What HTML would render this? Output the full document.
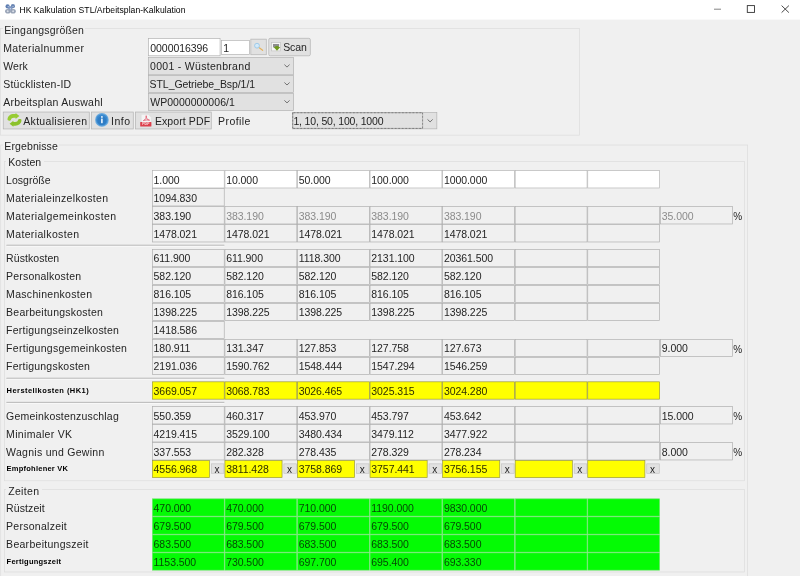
<!DOCTYPE html><html lang="de"><head><meta charset="utf-8"><title>HK Kalkulation STL/Arbeitsplan-Kalkulation</title>
<style>
html,body{margin:0;padding:0}
body{width:800px;height:576px;overflow:hidden;background:#f0f0f0;position:relative;
 font-family:"Liberation Sans",sans-serif;font-size:10.5px;color:#242424}
div,span{position:absolute;box-sizing:border-box}
#w{left:0;top:0;width:800px;height:576px;will-change:transform;filter:blur(0.35px)}
.t{white-space:nowrap;line-height:14px;height:14px;letter-spacing:0.26px}
.n{letter-spacing:-0.06px}
.g{color:#8b8b8b}
.ty{color:#2e2e00}
.tg{color:#064806}
.b{font-weight:bold;font-size:7.5px;color:#000;letter-spacing:0.1px}
.tt{font-size:8.6px;color:#000}
.gl{background:#f0f0f0}
svg{position:absolute;overflow:visible}
</style></head><body><div id="w">
<svg style="left:0;top:0" width="800" height="576" viewBox="0 0 800 576">
<rect x="0" y="0" width="800" height="19.6" fill="#fff"/>
<path d="M714 9.2H721" stroke="#777" stroke-width="0.9" fill="none"/>
<rect x="747.3" y="5.6" width="7.2" height="6.8" stroke="#333" stroke-width="0.9" fill="none"/>
<path d="M781.6 5.6L788.9 12.6M788.9 5.6L781.6 12.6" stroke="#333" stroke-width="0.9" fill="none"/>
<rect x="0.54" y="28.44" width="578.83" height="106.73" fill="none" stroke="#dcdcdc" stroke-width="0.67"/>
<rect x="148.64" y="38.54" width="71.43" height="17.23" fill="#fff" stroke="#b0b0b0" stroke-width="0.67"/>
<rect x="221.53" y="40.34" width="27.93" height="14.13" fill="#fff" stroke="#b0b0b0" stroke-width="0.67"/>
<rect x="250.84" y="39.13" width="15.43" height="15.63" fill="#e1e1e1" stroke="#b0b0b0" stroke-width="0.67"/>
<rect x="268.73" y="38.34" width="41.63" height="17.43" fill="#e1e1e1" stroke="#b0b0b0" stroke-width="0.67" rx="1.5"/>
<rect x="148.44" y="57.54" width="145.03" height="17.23" fill="#e1e1e1" stroke="#b0b0b0" stroke-width="0.67"/>
<path d="M284.4 64.60l2.6 2.5l2.6 -2.5" stroke="#555" stroke-width="0.8" fill="none"/>
<rect x="148.44" y="75.43" width="145.03" height="17.23" fill="#e1e1e1" stroke="#b0b0b0" stroke-width="0.67"/>
<path d="M284.4 82.50l2.6 2.5l2.6 -2.5" stroke="#555" stroke-width="0.8" fill="none"/>
<rect x="148.44" y="93.33" width="145.03" height="17.23" fill="#e1e1e1" stroke="#b0b0b0" stroke-width="0.67"/>
<path d="M284.4 100.40l2.6 2.5l2.6 -2.5" stroke="#555" stroke-width="0.8" fill="none"/>
<rect x="3.23" y="112.03" width="86.03" height="16.93" fill="#e1e1e1" stroke="#b0b0b0" stroke-width="0.67"/>
<rect x="91.53" y="112.03" width="41.73" height="16.93" fill="#e1e1e1" stroke="#b0b0b0" stroke-width="0.67"/>
<rect x="135.53" y="112.03" width="75.73" height="16.93" fill="#e1e1e1" stroke="#b0b0b0" stroke-width="0.67"/>
<rect x="292.33" y="112.33" width="144.53" height="16.53" fill="#e1e1e1" stroke="#b0b0b0" stroke-width="0.67"/>
<rect x="292.8" y="112.8" width="129.8" height="15.6" fill="none" stroke="#222" stroke-width="0.7" stroke-dasharray="0.7 0.7"/>
<path d="M427.5 119.4l2.6 2.5l2.6 -2.5" stroke="#555" stroke-width="0.8" fill="none"/>
<rect x="0.74" y="145.03" width="746.93" height="444.63" fill="none" stroke="#dcdcdc" stroke-width="0.67"/>
<rect x="4.63" y="161.44" width="739.93" height="319.33" fill="none" stroke="#dcdcdc" stroke-width="0.67"/>
<rect x="152.34" y="170.64" width="71.90" height="17.33" fill="#fff" stroke="#b4b4b4" stroke-width="0.67"/>
<rect x="224.91" y="170.64" width="71.90" height="17.33" fill="#fff" stroke="#b4b4b4" stroke-width="0.67"/>
<rect x="297.47" y="170.64" width="71.90" height="17.33" fill="#fff" stroke="#b4b4b4" stroke-width="0.67"/>
<rect x="370.04" y="170.64" width="71.90" height="17.33" fill="#fff" stroke="#b4b4b4" stroke-width="0.67"/>
<rect x="442.61" y="170.64" width="71.90" height="17.33" fill="#fff" stroke="#b4b4b4" stroke-width="0.67"/>
<rect x="515.18" y="170.64" width="71.90" height="17.33" fill="#fff" stroke="#b4b4b4" stroke-width="0.67"/>
<rect x="587.75" y="170.64" width="71.90" height="17.33" fill="#fff" stroke="#b4b4b4" stroke-width="0.67"/>
<rect x="152.34" y="188.64" width="71.90" height="17.33" fill="#f0f0f0" stroke="#adadad" stroke-width="0.67"/>
<rect x="152.34" y="206.64" width="71.90" height="17.33" fill="#f0f0f0" stroke="#adadad" stroke-width="0.67"/>
<rect x="224.91" y="206.64" width="71.90" height="17.33" fill="#f0f0f0" stroke="#adadad" stroke-width="0.67"/>
<rect x="297.47" y="206.64" width="71.90" height="17.33" fill="#f0f0f0" stroke="#adadad" stroke-width="0.67"/>
<rect x="370.04" y="206.64" width="71.90" height="17.33" fill="#f0f0f0" stroke="#adadad" stroke-width="0.67"/>
<rect x="442.61" y="206.64" width="71.90" height="17.33" fill="#f0f0f0" stroke="#adadad" stroke-width="0.67"/>
<rect x="515.18" y="206.64" width="71.90" height="17.33" fill="#f0f0f0" stroke="#adadad" stroke-width="0.67"/>
<rect x="587.75" y="206.64" width="71.90" height="17.33" fill="#f0f0f0" stroke="#adadad" stroke-width="0.67"/>
<rect x="660.34" y="206.64" width="72.13" height="17.33" fill="#f0f0f0" stroke="#adadad" stroke-width="0.67"/>
<rect x="152.34" y="224.64" width="71.90" height="17.33" fill="#f0f0f0" stroke="#adadad" stroke-width="0.67"/>
<rect x="224.91" y="224.64" width="71.90" height="17.33" fill="#f0f0f0" stroke="#adadad" stroke-width="0.67"/>
<rect x="297.47" y="224.64" width="71.90" height="17.33" fill="#f0f0f0" stroke="#adadad" stroke-width="0.67"/>
<rect x="370.04" y="224.64" width="71.90" height="17.33" fill="#f0f0f0" stroke="#adadad" stroke-width="0.67"/>
<rect x="442.61" y="224.64" width="71.90" height="17.33" fill="#f0f0f0" stroke="#adadad" stroke-width="0.67"/>
<rect x="515.18" y="224.64" width="71.90" height="17.33" fill="#f0f0f0" stroke="#adadad" stroke-width="0.67"/>
<rect x="587.75" y="224.64" width="71.90" height="17.33" fill="#f0f0f0" stroke="#adadad" stroke-width="0.67"/>
<rect x="152.34" y="249.34" width="71.90" height="17.33" fill="#f0f0f0" stroke="#adadad" stroke-width="0.67"/>
<rect x="224.91" y="249.34" width="71.90" height="17.33" fill="#f0f0f0" stroke="#adadad" stroke-width="0.67"/>
<rect x="297.47" y="249.34" width="71.90" height="17.33" fill="#f0f0f0" stroke="#adadad" stroke-width="0.67"/>
<rect x="370.04" y="249.34" width="71.90" height="17.33" fill="#f0f0f0" stroke="#adadad" stroke-width="0.67"/>
<rect x="442.61" y="249.34" width="71.90" height="17.33" fill="#f0f0f0" stroke="#adadad" stroke-width="0.67"/>
<rect x="515.18" y="249.34" width="71.90" height="17.33" fill="#f0f0f0" stroke="#adadad" stroke-width="0.67"/>
<rect x="587.75" y="249.34" width="71.90" height="17.33" fill="#f0f0f0" stroke="#adadad" stroke-width="0.67"/>
<rect x="152.34" y="267.33" width="71.90" height="17.33" fill="#f0f0f0" stroke="#adadad" stroke-width="0.67"/>
<rect x="224.91" y="267.33" width="71.90" height="17.33" fill="#f0f0f0" stroke="#adadad" stroke-width="0.67"/>
<rect x="297.47" y="267.33" width="71.90" height="17.33" fill="#f0f0f0" stroke="#adadad" stroke-width="0.67"/>
<rect x="370.04" y="267.33" width="71.90" height="17.33" fill="#f0f0f0" stroke="#adadad" stroke-width="0.67"/>
<rect x="442.61" y="267.33" width="71.90" height="17.33" fill="#f0f0f0" stroke="#adadad" stroke-width="0.67"/>
<rect x="515.18" y="267.33" width="71.90" height="17.33" fill="#f0f0f0" stroke="#adadad" stroke-width="0.67"/>
<rect x="587.75" y="267.33" width="71.90" height="17.33" fill="#f0f0f0" stroke="#adadad" stroke-width="0.67"/>
<rect x="152.34" y="285.33" width="71.90" height="17.33" fill="#f0f0f0" stroke="#adadad" stroke-width="0.67"/>
<rect x="224.91" y="285.33" width="71.90" height="17.33" fill="#f0f0f0" stroke="#adadad" stroke-width="0.67"/>
<rect x="297.47" y="285.33" width="71.90" height="17.33" fill="#f0f0f0" stroke="#adadad" stroke-width="0.67"/>
<rect x="370.04" y="285.33" width="71.90" height="17.33" fill="#f0f0f0" stroke="#adadad" stroke-width="0.67"/>
<rect x="442.61" y="285.33" width="71.90" height="17.33" fill="#f0f0f0" stroke="#adadad" stroke-width="0.67"/>
<rect x="515.18" y="285.33" width="71.90" height="17.33" fill="#f0f0f0" stroke="#adadad" stroke-width="0.67"/>
<rect x="587.75" y="285.33" width="71.90" height="17.33" fill="#f0f0f0" stroke="#adadad" stroke-width="0.67"/>
<rect x="152.34" y="303.33" width="71.90" height="17.33" fill="#f0f0f0" stroke="#adadad" stroke-width="0.67"/>
<rect x="224.91" y="303.33" width="71.90" height="17.33" fill="#f0f0f0" stroke="#adadad" stroke-width="0.67"/>
<rect x="297.47" y="303.33" width="71.90" height="17.33" fill="#f0f0f0" stroke="#adadad" stroke-width="0.67"/>
<rect x="370.04" y="303.33" width="71.90" height="17.33" fill="#f0f0f0" stroke="#adadad" stroke-width="0.67"/>
<rect x="442.61" y="303.33" width="71.90" height="17.33" fill="#f0f0f0" stroke="#adadad" stroke-width="0.67"/>
<rect x="515.18" y="303.33" width="71.90" height="17.33" fill="#f0f0f0" stroke="#adadad" stroke-width="0.67"/>
<rect x="587.75" y="303.33" width="71.90" height="17.33" fill="#f0f0f0" stroke="#adadad" stroke-width="0.67"/>
<rect x="152.34" y="321.33" width="71.90" height="17.33" fill="#f0f0f0" stroke="#adadad" stroke-width="0.67"/>
<rect x="152.34" y="339.33" width="71.90" height="17.33" fill="#f0f0f0" stroke="#adadad" stroke-width="0.67"/>
<rect x="224.91" y="339.33" width="71.90" height="17.33" fill="#f0f0f0" stroke="#adadad" stroke-width="0.67"/>
<rect x="297.47" y="339.33" width="71.90" height="17.33" fill="#f0f0f0" stroke="#adadad" stroke-width="0.67"/>
<rect x="370.04" y="339.33" width="71.90" height="17.33" fill="#f0f0f0" stroke="#adadad" stroke-width="0.67"/>
<rect x="442.61" y="339.33" width="71.90" height="17.33" fill="#f0f0f0" stroke="#adadad" stroke-width="0.67"/>
<rect x="515.18" y="339.33" width="71.90" height="17.33" fill="#f0f0f0" stroke="#adadad" stroke-width="0.67"/>
<rect x="587.75" y="339.33" width="71.90" height="17.33" fill="#f0f0f0" stroke="#adadad" stroke-width="0.67"/>
<rect x="660.34" y="339.33" width="72.13" height="17.33" fill="#f0f0f0" stroke="#adadad" stroke-width="0.67"/>
<rect x="152.34" y="357.33" width="71.90" height="17.33" fill="#f0f0f0" stroke="#adadad" stroke-width="0.67"/>
<rect x="224.91" y="357.33" width="71.90" height="17.33" fill="#f0f0f0" stroke="#adadad" stroke-width="0.67"/>
<rect x="297.47" y="357.33" width="71.90" height="17.33" fill="#f0f0f0" stroke="#adadad" stroke-width="0.67"/>
<rect x="370.04" y="357.33" width="71.90" height="17.33" fill="#f0f0f0" stroke="#adadad" stroke-width="0.67"/>
<rect x="442.61" y="357.33" width="71.90" height="17.33" fill="#f0f0f0" stroke="#adadad" stroke-width="0.67"/>
<rect x="515.18" y="357.33" width="71.90" height="17.33" fill="#f0f0f0" stroke="#adadad" stroke-width="0.67"/>
<rect x="587.75" y="357.33" width="71.90" height="17.33" fill="#f0f0f0" stroke="#adadad" stroke-width="0.67"/>
<rect x="152.34" y="406.63" width="71.90" height="17.33" fill="#f0f0f0" stroke="#adadad" stroke-width="0.67"/>
<rect x="224.91" y="406.63" width="71.90" height="17.33" fill="#f0f0f0" stroke="#adadad" stroke-width="0.67"/>
<rect x="297.47" y="406.63" width="71.90" height="17.33" fill="#f0f0f0" stroke="#adadad" stroke-width="0.67"/>
<rect x="370.04" y="406.63" width="71.90" height="17.33" fill="#f0f0f0" stroke="#adadad" stroke-width="0.67"/>
<rect x="442.61" y="406.63" width="71.90" height="17.33" fill="#f0f0f0" stroke="#adadad" stroke-width="0.67"/>
<rect x="515.18" y="406.63" width="71.90" height="17.33" fill="#f0f0f0" stroke="#adadad" stroke-width="0.67"/>
<rect x="587.75" y="406.63" width="71.90" height="17.33" fill="#f0f0f0" stroke="#adadad" stroke-width="0.67"/>
<rect x="660.34" y="406.63" width="72.13" height="17.33" fill="#f0f0f0" stroke="#adadad" stroke-width="0.67"/>
<rect x="152.34" y="424.63" width="71.90" height="17.33" fill="#f0f0f0" stroke="#adadad" stroke-width="0.67"/>
<rect x="224.91" y="424.63" width="71.90" height="17.33" fill="#f0f0f0" stroke="#adadad" stroke-width="0.67"/>
<rect x="297.47" y="424.63" width="71.90" height="17.33" fill="#f0f0f0" stroke="#adadad" stroke-width="0.67"/>
<rect x="370.04" y="424.63" width="71.90" height="17.33" fill="#f0f0f0" stroke="#adadad" stroke-width="0.67"/>
<rect x="442.61" y="424.63" width="71.90" height="17.33" fill="#f0f0f0" stroke="#adadad" stroke-width="0.67"/>
<rect x="515.18" y="424.63" width="71.90" height="17.33" fill="#f0f0f0" stroke="#adadad" stroke-width="0.67"/>
<rect x="587.75" y="424.63" width="71.90" height="17.33" fill="#f0f0f0" stroke="#adadad" stroke-width="0.67"/>
<rect x="152.34" y="442.63" width="71.90" height="17.33" fill="#f0f0f0" stroke="#adadad" stroke-width="0.67"/>
<rect x="224.91" y="442.63" width="71.90" height="17.33" fill="#f0f0f0" stroke="#adadad" stroke-width="0.67"/>
<rect x="297.47" y="442.63" width="71.90" height="17.33" fill="#f0f0f0" stroke="#adadad" stroke-width="0.67"/>
<rect x="370.04" y="442.63" width="71.90" height="17.33" fill="#f0f0f0" stroke="#adadad" stroke-width="0.67"/>
<rect x="442.61" y="442.63" width="71.90" height="17.33" fill="#f0f0f0" stroke="#adadad" stroke-width="0.67"/>
<rect x="515.18" y="442.63" width="71.90" height="17.33" fill="#f0f0f0" stroke="#adadad" stroke-width="0.67"/>
<rect x="587.75" y="442.63" width="71.90" height="17.33" fill="#f0f0f0" stroke="#adadad" stroke-width="0.67"/>
<rect x="660.34" y="442.63" width="72.13" height="17.33" fill="#f0f0f0" stroke="#adadad" stroke-width="0.67"/>
<path d="M6.50 245.30L224.30 245.30" stroke="#8e8e8e" stroke-width="0.8" fill="none"/>
<path d="M6.50 246.10L224.30 246.10" stroke="#ffffff" stroke-width="0.8" fill="none"/>
<path d="M6.50 378.30L224.30 378.30" stroke="#8e8e8e" stroke-width="0.8" fill="none"/>
<path d="M6.50 379.10L224.30 379.10" stroke="#ffffff" stroke-width="0.8" fill="none"/>
<path d="M6.50 402.40L224.30 402.40" stroke="#8e8e8e" stroke-width="0.8" fill="none"/>
<path d="M6.50 403.20L224.30 403.20" stroke="#ffffff" stroke-width="0.8" fill="none"/>
<rect x="152.34" y="381.83" width="71.90" height="17.33" fill="#ffff00" stroke="#96963c" stroke-width="0.67"/>
<rect x="224.91" y="381.83" width="71.90" height="17.33" fill="#ffff00" stroke="#96963c" stroke-width="0.67"/>
<rect x="297.47" y="381.83" width="71.90" height="17.33" fill="#ffff00" stroke="#96963c" stroke-width="0.67"/>
<rect x="370.04" y="381.83" width="71.90" height="17.33" fill="#ffff00" stroke="#96963c" stroke-width="0.67"/>
<rect x="442.61" y="381.83" width="71.90" height="17.33" fill="#ffff00" stroke="#96963c" stroke-width="0.67"/>
<rect x="515.18" y="381.83" width="71.90" height="17.33" fill="#ffff00" stroke="#96963c" stroke-width="0.67"/>
<rect x="587.75" y="381.83" width="71.90" height="17.33" fill="#ffff00" stroke="#96963c" stroke-width="0.67"/>
<rect x="152.34" y="460.63" width="57.13" height="17.03" fill="#ffff00" stroke="#96963c" stroke-width="0.67"/>
<rect x="211.34" y="463.83" width="12.53" height="9.43" fill="#e1e1e1" stroke="#c2c2c2" stroke-width="0.67"/>
<rect x="224.91" y="460.63" width="57.13" height="17.03" fill="#ffff00" stroke="#96963c" stroke-width="0.67"/>
<rect x="283.90" y="463.83" width="12.53" height="9.43" fill="#e1e1e1" stroke="#c2c2c2" stroke-width="0.67"/>
<rect x="297.47" y="460.63" width="57.13" height="17.03" fill="#ffff00" stroke="#96963c" stroke-width="0.67"/>
<rect x="356.47" y="463.83" width="12.53" height="9.43" fill="#e1e1e1" stroke="#c2c2c2" stroke-width="0.67"/>
<rect x="370.04" y="460.63" width="57.13" height="17.03" fill="#ffff00" stroke="#96963c" stroke-width="0.67"/>
<rect x="429.04" y="463.83" width="12.53" height="9.43" fill="#e1e1e1" stroke="#c2c2c2" stroke-width="0.67"/>
<rect x="442.61" y="460.63" width="57.13" height="17.03" fill="#ffff00" stroke="#96963c" stroke-width="0.67"/>
<rect x="501.61" y="463.83" width="12.53" height="9.43" fill="#e1e1e1" stroke="#c2c2c2" stroke-width="0.67"/>
<rect x="515.18" y="460.63" width="57.13" height="17.03" fill="#ffff00" stroke="#96963c" stroke-width="0.67"/>
<rect x="574.18" y="463.83" width="12.53" height="9.43" fill="#e1e1e1" stroke="#c2c2c2" stroke-width="0.67"/>
<rect x="587.75" y="460.63" width="57.13" height="17.03" fill="#ffff00" stroke="#96963c" stroke-width="0.67"/>
<rect x="646.75" y="463.83" width="12.53" height="9.43" fill="#e1e1e1" stroke="#c2c2c2" stroke-width="0.67"/>
<rect x="4.63" y="489.44" width="739.93" height="82.53" fill="none" stroke="#dcdcdc" stroke-width="0.67"/>
<rect x="152.34" y="498.83" width="71.90" height="17.33" fill="#04fb04" stroke="#6fe46f" stroke-width="0.67"/>
<rect x="224.91" y="498.83" width="71.90" height="17.33" fill="#04fb04" stroke="#6fe46f" stroke-width="0.67"/>
<rect x="297.47" y="498.83" width="71.90" height="17.33" fill="#04fb04" stroke="#6fe46f" stroke-width="0.67"/>
<rect x="370.04" y="498.83" width="71.90" height="17.33" fill="#04fb04" stroke="#6fe46f" stroke-width="0.67"/>
<rect x="442.61" y="498.83" width="71.90" height="17.33" fill="#04fb04" stroke="#6fe46f" stroke-width="0.67"/>
<rect x="515.18" y="498.83" width="71.90" height="17.33" fill="#04fb04" stroke="#6fe46f" stroke-width="0.67"/>
<rect x="587.75" y="498.83" width="71.90" height="17.33" fill="#04fb04" stroke="#6fe46f" stroke-width="0.67"/>
<rect x="152.34" y="516.84" width="71.90" height="17.33" fill="#04fb04" stroke="#6fe46f" stroke-width="0.67"/>
<rect x="224.91" y="516.84" width="71.90" height="17.33" fill="#04fb04" stroke="#6fe46f" stroke-width="0.67"/>
<rect x="297.47" y="516.84" width="71.90" height="17.33" fill="#04fb04" stroke="#6fe46f" stroke-width="0.67"/>
<rect x="370.04" y="516.84" width="71.90" height="17.33" fill="#04fb04" stroke="#6fe46f" stroke-width="0.67"/>
<rect x="442.61" y="516.84" width="71.90" height="17.33" fill="#04fb04" stroke="#6fe46f" stroke-width="0.67"/>
<rect x="515.18" y="516.84" width="71.90" height="17.33" fill="#04fb04" stroke="#6fe46f" stroke-width="0.67"/>
<rect x="587.75" y="516.84" width="71.90" height="17.33" fill="#04fb04" stroke="#6fe46f" stroke-width="0.67"/>
<rect x="152.34" y="534.84" width="71.90" height="17.33" fill="#04fb04" stroke="#6fe46f" stroke-width="0.67"/>
<rect x="224.91" y="534.84" width="71.90" height="17.33" fill="#04fb04" stroke="#6fe46f" stroke-width="0.67"/>
<rect x="297.47" y="534.84" width="71.90" height="17.33" fill="#04fb04" stroke="#6fe46f" stroke-width="0.67"/>
<rect x="370.04" y="534.84" width="71.90" height="17.33" fill="#04fb04" stroke="#6fe46f" stroke-width="0.67"/>
<rect x="442.61" y="534.84" width="71.90" height="17.33" fill="#04fb04" stroke="#6fe46f" stroke-width="0.67"/>
<rect x="515.18" y="534.84" width="71.90" height="17.33" fill="#04fb04" stroke="#6fe46f" stroke-width="0.67"/>
<rect x="587.75" y="534.84" width="71.90" height="17.33" fill="#04fb04" stroke="#6fe46f" stroke-width="0.67"/>
<rect x="152.34" y="552.84" width="71.90" height="17.33" fill="#04fb04" stroke="#6fe46f" stroke-width="0.67"/>
<rect x="224.91" y="552.84" width="71.90" height="17.33" fill="#04fb04" stroke="#6fe46f" stroke-width="0.67"/>
<rect x="297.47" y="552.84" width="71.90" height="17.33" fill="#04fb04" stroke="#6fe46f" stroke-width="0.67"/>
<rect x="370.04" y="552.84" width="71.90" height="17.33" fill="#04fb04" stroke="#6fe46f" stroke-width="0.67"/>
<rect x="442.61" y="552.84" width="71.90" height="17.33" fill="#04fb04" stroke="#6fe46f" stroke-width="0.67"/>
<rect x="515.18" y="552.84" width="71.90" height="17.33" fill="#04fb04" stroke="#6fe46f" stroke-width="0.67"/>
<rect x="587.75" y="552.84" width="71.90" height="17.33" fill="#04fb04" stroke="#6fe46f" stroke-width="0.67"/>
</svg>
<svg style="left:5px;top:4.2px" width="11" height="10" viewBox="0 0 11 10">
<circle cx="2.6" cy="2.4" r="2.1" fill="#5f7fb2"/><circle cx="7.9" cy="2.2" r="2.1" fill="#6a86b4"/>
<circle cx="5.3" cy="4.4" r="2.2" fill="#7f97c2"/>
<ellipse cx="2.9" cy="7.2" rx="2.8" ry="2.3" fill="#98a3b6"/><ellipse cx="8" cy="7.2" rx="2.8" ry="2.3" fill="#98a3b6"/>
<circle cx="2.7" cy="7.3" r="1" fill="#d9dee8"/><circle cx="8.1" cy="7.3" r="1" fill="#d9dee8"/>
<circle cx="3.2" cy="2.6" r="0.7" fill="#b9c8e2"/><circle cx="8" cy="2.6" r="0.7" fill="#b9c8e2"/><circle cx="5.4" cy="4.8" r="0.8" fill="#c9d5ea"/>
</svg>
<span class="t tt" style="left:19.40px;top:2.80px;letter-spacing:0.03px;">HK Kalkulation STL/Arbeitsplan-Kalkulation</span>
<div class="gl" style="left:3px;top:25px;width:82px;height:10px"></div>
<span class="t " style="left:4.35px;top:22.70px;letter-spacing:0.196px;">Eingangsgrößen</span>
<span class="t " style="left:3.20px;top:40.70px;letter-spacing:0.373px;">Materialnummer</span>
<span class="t " style="left:3.20px;top:58.70px;letter-spacing:0.105px;">Werk</span>
<span class="t " style="left:3.20px;top:76.70px;letter-spacing:0.249px;">Stücklisten-ID</span>
<span class="t " style="left:3.20px;top:94.70px;letter-spacing:0.271px;">Arbeitsplan Auswahl</span>
<span class="t n" style="left:150.30px;top:40.70px;">0000016396</span>
<span class="t n" style="left:223.30px;top:40.70px;">1</span>
<svg style="left:252px;top:41px" width="13" height="12" viewBox="0 0 13 12">
<path d="M7.3 6.8L10.6 9.3" stroke="#e6b25a" stroke-width="1.2" stroke-linecap="round"/>
<circle cx="5" cy="4.7" r="2.4" fill="#d3eaf9" stroke="#98c6e6" stroke-width="0.9"/>
</svg>
<svg style="left:271px;top:42.4px" width="10" height="9.4" viewBox="0 0 10 9.4">
<rect x="0.6" y="0.6" width="9" height="8.3" fill="#f6f6f6" stroke="#c4c4c4" stroke-width="0.7"/>
<rect x="2" y="2" width="6.1" height="3.4" fill="#8e8e8e"/>
<path d="M2.6 5.1H9.3L6 8.8Z" fill="#6f9a1f"/><path d="M4.4 4H7.4V5.6H4.4Z" fill="#6f9a1f"/>
</svg>
<span class="t " style="left:283.20px;top:40.30px;letter-spacing:-0.1px;">Scan</span>
<span class="t " style="left:150.05px;top:59.00px;letter-spacing:0.297px;">0001 - Wüstenbrand</span>
<span class="t " style="left:149.60px;top:77.00px;letter-spacing:-0.07px;">STL_Getriebe_Bsp/1/1</span>
<span class="t " style="left:150.20px;top:95.00px;letter-spacing:0.043px;">WP0000000006/1</span>
<svg style="left:6.5px;top:113px" width="15" height="14" viewBox="0 0 15 14">
<path d="M0.5 6.6C0.5 3 3.4 1 6.8 1H8.6V-0.1L12.4 2.9L8.6 5.9V4.7H6.9C5.2 4.7 4.2 5.5 3.9 6.9C3.6 8 0.5 8 0.5 6.6Z" fill="#98cc33"/>
<path d="M14.5 7.1C14.5 10.7 11.6 12.7 8.2 12.7H6.4V13.8L2.6 10.8L6.4 7.8V9H8.1C9.8 9 10.8 8.2 11.1 6.8C11.4 5.7 14.5 5.7 14.5 7.1Z" fill="#8cc22c"/>
</svg>
<span class="t " style="left:23.32px;top:113.60px;letter-spacing:0.295px;">Aktualisieren</span>
<svg style="left:94.9px;top:113.1px" width="13.8" height="13.8" viewBox="0 0 13.8 13.8">
<circle cx="6.9" cy="6.9" r="6.8" fill="#66a8de"/>
<circle cx="6.9" cy="6.9" r="5.7" fill="#3a89cf"/>
<circle cx="6.9" cy="7.6" r="4.4" fill="#2f7dc5"/>
<circle cx="6.9" cy="3.9" r="0.95" fill="#eef6ff"/><rect x="6.1" y="5.6" width="1.6" height="4.6" rx="0.4" fill="#eef6ff"/>
</svg>
<span class="t " style="left:111.00px;top:113.60px;letter-spacing:0.55px;">Info</span>
<svg style="left:140px;top:114.2px" width="12" height="12.8" viewBox="0 0 12 12.8">
<path d="M1.2 0.3H8.4L11.4 3.3V12.5H1.2Z" fill="#f4f4f4" stroke="#d6d6d6" stroke-width="0.5"/>
<path d="M3.4 6.6C5.4 5.8 6.8 3.6 6.2 1.7C5.7 3.8 7.4 6 9.6 6.2C7.4 5.7 5 6.1 3.4 6.6Z" fill="none" stroke="#e2566a" stroke-width="0.8"/>
<rect x="0.2" y="7.9" width="11.2" height="4.6" rx="0.5" fill="#dc3f4b"/>
<text x="5.8" y="11.5" font-family="Liberation Sans, sans-serif" font-size="3.6" font-weight="bold" fill="#fbe3e5" text-anchor="middle">PDF</text>
</svg>
<span class="t " style="left:154.90px;top:113.60px;letter-spacing:-0.1px;letter-spacing:0.1px">Export PDF</span>
<span class="t " style="left:218.10px;top:113.60px;letter-spacing:0.412px;">Profile</span>
<span class="t n" style="left:293.44px;top:113.60px;letter-spacing:-0.175px;">1, 10, 50, 100, 1000</span>
<div class="gl" style="left:3px;top:141px;width:56px;height:10px"></div>
<span class="t " style="left:4.35px;top:138.80px;letter-spacing:0.105px;">Ergebnisse</span>
<div class="gl" style="left:6px;top:157px;width:38px;height:10px"></div>
<span class="t " style="left:8.30px;top:155.40px;letter-spacing:0.02px;">Kosten</span>
<span class="t " style="left:6.10px;top:172.50px;letter-spacing:0.017px;">Losgröße</span>
<span class="t n " style="left:153.60px;top:172.50px;">1.000</span>
<span class="t n " style="left:226.17px;top:172.50px;">10.000</span>
<span class="t n " style="left:298.74px;top:172.50px;">50.000</span>
<span class="t n " style="left:371.31px;top:172.50px;">100.000</span>
<span class="t n " style="left:443.88px;top:172.50px;">1000.000</span>
<span class="t " style="left:6.10px;top:190.50px;letter-spacing:0.325px;">Materialeinzelkosten</span>
<span class="t n " style="left:153.60px;top:190.50px;">1094.830</span>
<span class="t " style="left:6.10px;top:208.50px;letter-spacing:0.378px;">Materialgemeinkosten</span>
<span class="t n " style="left:153.60px;top:208.50px;">383.190</span>
<span class="t n  g" style="left:226.17px;top:208.50px;">383.190</span>
<span class="t n  g" style="left:298.74px;top:208.50px;">383.190</span>
<span class="t n  g" style="left:371.31px;top:208.50px;">383.190</span>
<span class="t n  g" style="left:443.88px;top:208.50px;">383.190</span>
<span class="t n g" style="left:661.80px;top:208.50px;">35.000</span>
<span class="t n" style="left:733.20px;top:210.00px;font-size:10px;">%</span>
<span class="t " style="left:6.10px;top:226.50px;letter-spacing:0.356px;">Materialkosten</span>
<span class="t n " style="left:153.60px;top:226.50px;">1478.021</span>
<span class="t n " style="left:226.17px;top:226.50px;">1478.021</span>
<span class="t n " style="left:298.74px;top:226.50px;">1478.021</span>
<span class="t n " style="left:371.31px;top:226.50px;">1478.021</span>
<span class="t n " style="left:443.88px;top:226.50px;">1478.021</span>
<span class="t " style="left:6.10px;top:251.20px;letter-spacing:0.06px;">Rüstkosten</span>
<span class="t n " style="left:153.60px;top:251.20px;">611.900</span>
<span class="t n " style="left:226.17px;top:251.20px;">611.900</span>
<span class="t n " style="left:298.74px;top:251.20px;">1118.300</span>
<span class="t n " style="left:371.31px;top:251.20px;">2131.100</span>
<span class="t n " style="left:443.88px;top:251.20px;">20361.500</span>
<span class="t " style="left:6.10px;top:269.20px;letter-spacing:0.195px;">Personalkosten</span>
<span class="t n " style="left:153.60px;top:269.20px;">582.120</span>
<span class="t n " style="left:226.17px;top:269.20px;">582.120</span>
<span class="t n " style="left:298.74px;top:269.20px;">582.120</span>
<span class="t n " style="left:371.31px;top:269.20px;">582.120</span>
<span class="t n " style="left:443.88px;top:269.20px;">582.120</span>
<span class="t " style="left:6.10px;top:287.20px;letter-spacing:0.299px;">Maschinenkosten</span>
<span class="t n " style="left:153.60px;top:287.20px;">816.105</span>
<span class="t n " style="left:226.17px;top:287.20px;">816.105</span>
<span class="t n " style="left:298.74px;top:287.20px;">816.105</span>
<span class="t n " style="left:371.31px;top:287.20px;">816.105</span>
<span class="t n " style="left:443.88px;top:287.20px;">816.105</span>
<span class="t " style="left:6.10px;top:305.20px;letter-spacing:0.236px;">Bearbeitungskosten</span>
<span class="t n " style="left:153.60px;top:305.20px;">1398.225</span>
<span class="t n " style="left:226.17px;top:305.20px;">1398.225</span>
<span class="t n " style="left:298.74px;top:305.20px;">1398.225</span>
<span class="t n " style="left:371.31px;top:305.20px;">1398.225</span>
<span class="t n " style="left:443.88px;top:305.20px;">1398.225</span>
<span class="t " style="left:6.10px;top:323.20px;letter-spacing:0.231px;">Fertigungseinzelkosten</span>
<span class="t n " style="left:153.60px;top:323.20px;">1418.586</span>
<span class="t " style="left:6.10px;top:341.20px;letter-spacing:0.279px;">Fertigungsgemeinkosten</span>
<span class="t n " style="left:153.60px;top:341.20px;">180.911</span>
<span class="t n " style="left:226.17px;top:341.20px;">131.347</span>
<span class="t n " style="left:298.74px;top:341.20px;">127.853</span>
<span class="t n " style="left:371.31px;top:341.20px;">127.758</span>
<span class="t n " style="left:443.88px;top:341.20px;">127.673</span>
<span class="t n" style="left:661.80px;top:341.20px;">9.000</span>
<span class="t n" style="left:733.20px;top:342.70px;font-size:10px;">%</span>
<span class="t " style="left:6.10px;top:359.20px;letter-spacing:0.219px;">Fertigungskosten</span>
<span class="t n " style="left:153.60px;top:359.20px;">2191.036</span>
<span class="t n " style="left:226.17px;top:359.20px;">1590.762</span>
<span class="t n " style="left:298.74px;top:359.20px;">1548.444</span>
<span class="t n " style="left:371.31px;top:359.20px;">1547.294</span>
<span class="t n " style="left:443.88px;top:359.20px;">1546.259</span>
<span class="t " style="left:6.10px;top:408.50px;letter-spacing:0.184px;">Gemeinkostenzuschlag</span>
<span class="t n " style="left:153.60px;top:408.50px;">550.359</span>
<span class="t n " style="left:226.17px;top:408.50px;">460.317</span>
<span class="t n " style="left:298.74px;top:408.50px;">453.970</span>
<span class="t n " style="left:371.31px;top:408.50px;">453.797</span>
<span class="t n " style="left:443.88px;top:408.50px;">453.642</span>
<span class="t n" style="left:661.80px;top:408.50px;">15.000</span>
<span class="t n" style="left:733.20px;top:410.00px;font-size:10px;">%</span>
<span class="t " style="left:6.10px;top:426.50px;letter-spacing:0.326px;">Minimaler VK</span>
<span class="t n " style="left:153.60px;top:426.50px;">4219.415</span>
<span class="t n " style="left:226.17px;top:426.50px;">3529.100</span>
<span class="t n " style="left:298.74px;top:426.50px;">3480.434</span>
<span class="t n " style="left:371.31px;top:426.50px;">3479.112</span>
<span class="t n " style="left:443.88px;top:426.50px;">3477.922</span>
<span class="t " style="left:6.10px;top:444.50px;letter-spacing:0.289px;">Wagnis und Gewinn</span>
<span class="t n " style="left:153.60px;top:444.50px;">337.553</span>
<span class="t n " style="left:226.17px;top:444.50px;">282.328</span>
<span class="t n " style="left:298.74px;top:444.50px;">278.435</span>
<span class="t n " style="left:371.31px;top:444.50px;">278.329</span>
<span class="t n " style="left:443.88px;top:444.50px;">278.234</span>
<span class="t n" style="left:661.80px;top:444.50px;">8.000</span>
<span class="t n" style="left:733.20px;top:446.00px;font-size:10px;">%</span>
<span class="t b" style="left:6.62px;top:383.60px;letter-spacing:0.435px;">Herstellkosten (HK1)</span>
<span class="t n ty" style="left:153.60px;top:383.70px;">3669.057</span>
<span class="t n ty" style="left:226.17px;top:383.70px;">3068.783</span>
<span class="t n ty" style="left:298.74px;top:383.70px;">3026.465</span>
<span class="t n ty" style="left:371.31px;top:383.70px;">3025.315</span>
<span class="t n ty" style="left:443.88px;top:383.70px;">3024.280</span>
<span class="t b" style="left:6.62px;top:462.20px;letter-spacing:0.232px;">Empfohlener VK</span>
<span class="t n ty" style="left:153.60px;top:462.20px;">4556.968</span>
<span class="t n" style="left:214.50px;top:463.40px;font-size:10px;">x</span>
<span class="t n ty" style="left:226.17px;top:462.20px;">3811.428</span>
<span class="t n" style="left:287.07px;top:463.40px;font-size:10px;">x</span>
<span class="t n ty" style="left:298.74px;top:462.20px;">3758.869</span>
<span class="t n" style="left:359.64px;top:463.40px;font-size:10px;">x</span>
<span class="t n ty" style="left:371.31px;top:462.20px;">3757.441</span>
<span class="t n" style="left:432.21px;top:463.40px;font-size:10px;">x</span>
<span class="t n ty" style="left:443.88px;top:462.20px;">3756.155</span>
<span class="t n" style="left:504.78px;top:463.40px;font-size:10px;">x</span>
<span class="t n" style="left:577.35px;top:463.40px;font-size:10px;">x</span>
<span class="t n" style="left:649.92px;top:463.40px;font-size:10px;">x</span>
<div class="gl" style="left:6px;top:485px;width:36px;height:10px"></div>
<span class="t " style="left:8.20px;top:483.60px;letter-spacing:0.336px;">Zeiten</span>
<span class="t " style="left:6.10px;top:500.70px;letter-spacing:0.094px;">Rüstzeit</span>
<span class="t n tg" style="left:153.60px;top:500.70px;">470.000</span>
<span class="t n tg" style="left:226.17px;top:500.70px;">470.000</span>
<span class="t n tg" style="left:298.74px;top:500.70px;">710.000</span>
<span class="t n tg" style="left:371.31px;top:500.70px;">1190.000</span>
<span class="t n tg" style="left:443.88px;top:500.70px;">9830.000</span>
<span class="t " style="left:6.10px;top:518.70px;letter-spacing:0.263px;">Personalzeit</span>
<span class="t n tg" style="left:153.60px;top:518.70px;">679.500</span>
<span class="t n tg" style="left:226.17px;top:518.70px;">679.500</span>
<span class="t n tg" style="left:298.74px;top:518.70px;">679.500</span>
<span class="t n tg" style="left:371.31px;top:518.70px;">679.500</span>
<span class="t n tg" style="left:443.88px;top:518.70px;">679.500</span>
<span class="t " style="left:6.10px;top:536.70px;letter-spacing:0.281px;">Bearbeitungszeit</span>
<span class="t n tg" style="left:153.60px;top:536.70px;">683.500</span>
<span class="t n tg" style="left:226.17px;top:536.70px;">683.500</span>
<span class="t n tg" style="left:298.74px;top:536.70px;">683.500</span>
<span class="t n tg" style="left:371.31px;top:536.70px;">683.500</span>
<span class="t n tg" style="left:443.88px;top:536.70px;">683.500</span>
<span class="t b" style="left:6.62px;top:555.30px;letter-spacing:0.239px;">Fertigungszeit</span>
<span class="t n tg" style="left:153.60px;top:554.70px;">1153.500</span>
<span class="t n tg" style="left:226.17px;top:554.70px;">730.500</span>
<span class="t n tg" style="left:298.74px;top:554.70px;">697.700</span>
<span class="t n tg" style="left:371.31px;top:554.70px;">695.400</span>
<span class="t n tg" style="left:443.88px;top:554.70px;">693.330</span>
</div></body></html>
